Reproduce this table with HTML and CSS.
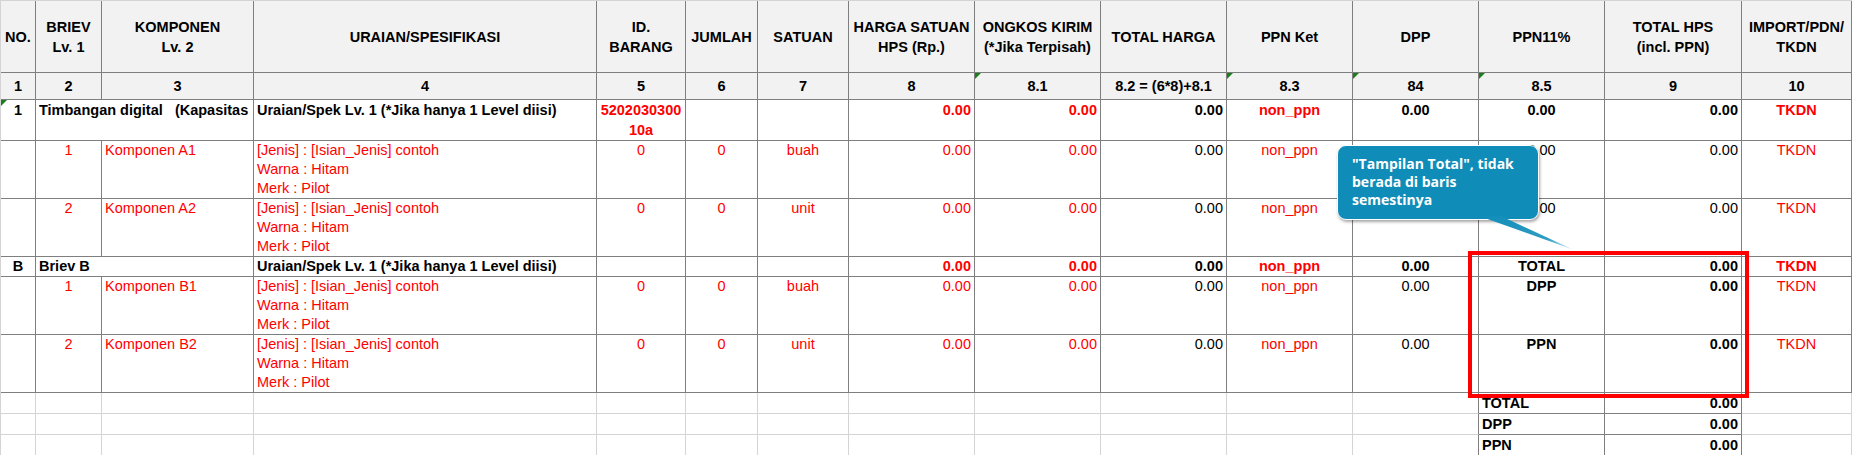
FILE: index.html
```html
<!DOCTYPE html>
<html lang="id">
<head>
<meta charset="utf-8">
<title>HPS</title>
<link rel="stylesheet" href="styles.css">
</head>
<body>
<div class="sheet">
  <table class="grid">
    <colgroup>
      <col class="w35"><col class="w66"><col class="w152"><col class="w343"><col class="w89"><col class="w72"><col class="w91">
      <col class="w126"><col class="w126"><col class="w126"><col class="w126"><col class="w126"><col class="w126"><col class="w137"><col class="w110">
    </colgroup>
    <tr class="hd">
      <th>NO.</th>
      <th>BRIEV<br>Lv. 1</th>
      <th>KOMPONEN<br>Lv. 2</th>
      <th>URAIAN/SPESIFIKASI</th>
      <th>ID.<br>BARANG</th>
      <th>JUMLAH</th>
      <th>SATUAN</th>
      <th>HARGA SATUAN<br>HPS (Rp.)</th>
      <th>ONGKOS KIRIM<br>(*Jika Terpisah)</th>
      <th>TOTAL HARGA</th>
      <th>PPN Ket</th>
      <th>DPP</th>
      <th>PPN11%</th>
      <th>TOTAL HPS<br>(incl. PPN)</th>
      <th>IMPORT/PDN/<br>TKDN</th>
    </tr>
    <tr class="num">
      <th>1</th><th>2</th><th>3</th><th>4</th><th>5</th><th>6</th><th>7</th><th>8</th>
      <th class="mark"><span class="flag"></span>8.1</th>
      <th>8.2 = (6*8)+8.1</th>
      <th class="mark"><span class="flag"></span>8.3</th>
      <th class="mark"><span class="flag"></span>84</th>
      <th class="mark"><span class="flag"></span>8.5</th>
      <th>9</th><th>10</th>
    </tr>
    <tr class="r1">
      <td class="c b mark"><span class="flag"></span>1</td>
      <td class="b pre" colspan="2">Timbangan digital   (Kapasitas</td>
      <td class="b">Uraian/Spek Lv. 1 (*Jika hanya 1 Level diisi)</td>
      <td class="c b red">5202030300<br>10a</td>
      <td></td><td></td>
      <td class="rt b red">0.00</td>
      <td class="rt b red">0.00</td>
      <td class="rt b">0.00</td>
      <td class="c b red">non_ppn</td>
      <td class="c b">0.00</td>
      <td class="c b">0.00</td>
      <td class="rt b">0.00</td>
      <td class="c b red">TKDN</td>
    </tr>
    <tr class="item">
      <td></td>
      <td class="c red">1</td>
      <td class="red">Komponen A1</td>
      <td class="red">[Jenis] : [Isian_Jenis] contoh<br>Warna : Hitam<br>Merk : Pilot</td>
      <td class="c red">0</td><td class="c red">0</td><td class="c red">buah</td>
      <td class="rt red">0.00</td><td class="rt red">0.00</td><td class="rt">0.00</td>
      <td class="c red">non_ppn</td><td class="c">0.00</td><td class="c">0.00</td><td class="rt">0.00</td>
      <td class="c red">TKDN</td>
    </tr>
    <tr class="item">
      <td></td>
      <td class="c red">2</td>
      <td class="red">Komponen A2</td>
      <td class="red">[Jenis] : [Isian_Jenis] contoh<br>Warna : Hitam<br>Merk : Pilot</td>
      <td class="c red">0</td><td class="c red">0</td><td class="c red">unit</td>
      <td class="rt red">0.00</td><td class="rt red">0.00</td><td class="rt">0.00</td>
      <td class="c red">non_ppn</td><td class="c">0.00</td><td class="c">0.00</td><td class="rt">0.00</td>
      <td class="c red">TKDN</td>
    </tr>
    <tr class="grp">
      <td class="c b">B</td>
      <td class="b" colspan="2">Briev B</td>
      <td class="b">Uraian/Spek Lv. 1 (*Jika hanya 1 Level diisi)</td>
      <td></td><td></td><td></td>
      <td class="rt b red">0.00</td>
      <td class="rt b red">0.00</td>
      <td class="rt b">0.00</td>
      <td class="c b red">non_ppn</td>
      <td class="c b">0.00</td>
      <td class="c b">TOTAL</td>
      <td class="rt b">0.00</td>
      <td class="c b red">TKDN</td>
    </tr>
    <tr class="item">
      <td></td>
      <td class="c red">1</td>
      <td class="red">Komponen B1</td>
      <td class="red">[Jenis] : [Isian_Jenis] contoh<br>Warna : Hitam<br>Merk : Pilot</td>
      <td class="c red">0</td><td class="c red">0</td><td class="c red">buah</td>
      <td class="rt red">0.00</td><td class="rt red">0.00</td><td class="rt">0.00</td>
      <td class="c red">non_ppn</td><td class="c">0.00</td><td class="c b">DPP</td><td class="rt b">0.00</td>
      <td class="c red">TKDN</td>
    </tr>
    <tr class="item">
      <td></td>
      <td class="c red">2</td>
      <td class="red">Komponen B2</td>
      <td class="red">[Jenis] : [Isian_Jenis] contoh<br>Warna : Hitam<br>Merk : Pilot</td>
      <td class="c red">0</td><td class="c red">0</td><td class="c red">unit</td>
      <td class="rt red">0.00</td><td class="rt red">0.00</td><td class="rt">0.00</td>
      <td class="c red">non_ppn</td><td class="c">0.00</td><td class="c b">PPN</td><td class="rt b">0.00</td>
      <td class="c red">TKDN</td>
    </tr>
    <tr class="empty">
      <td></td><td></td><td></td><td></td><td></td><td></td><td></td><td></td><td></td><td></td><td></td>
      <td class="edge"></td>
      <td class="box b">TOTAL</td>
      <td class="box rt b">0.00</td>
      <td></td>
    </tr>
    <tr class="empty">
      <td></td><td></td><td></td><td></td><td></td><td></td><td></td><td></td><td></td><td></td><td></td>
      <td class="edge"></td>
      <td class="box b">DPP</td>
      <td class="box rt b">0.00</td>
      <td></td>
    </tr>
    <tr class="empty">
      <td></td><td></td><td></td><td></td><td></td><td></td><td></td><td></td><td></td><td></td><td></td>
      <td class="edge"></td>
      <td class="box b">PPN</td>
      <td class="box rt b">0.00</td>
      <td></td>
    </tr>
  </table>

  <div class="highlight"></div>

  <svg class="tail" width="110" height="40" viewBox="0 0 110 40">
    <defs>
      <linearGradient id="tailFill" x1="0" y1="0" x2="1" y2="1">
        <stop offset="0" stop-color="#0f8cb7"/>
        <stop offset="0.7" stop-color="#2f9dc4"/>
        <stop offset="1" stop-color="#e6f3f8"/>
      </linearGradient>
    </defs>
    <polygon points="0,0 22,0 95,34" fill="url(#tailFill)"/>
  </svg>
  <div class="callout">"Tampilan Total", tidak<br>berada di baris<br>semestinya</div>
</div>
</body>
</html>
```

FILE: styles.css
```css
html, body {
  margin: 0;
  padding: 0;
  background: #ffffff;
}

body {
  font-family: "Liberation Sans", Arial, sans-serif;
  font-size: 14.5px;
  color: #000000;
}

.sheet {
  position: relative;
  width: 1852px;
  height: 455px;
  overflow: hidden;
}

.grid {
  border-collapse: separate;
  border-spacing: 0;
  table-layout: fixed;
  width: 1852px;
  border-left: 1px solid #d4d4d4;
  border-top: 1px solid #d4d4d4;
}

.w35 { width: 35px; }
.w66 { width: 66px; }
.w152 { width: 152px; }
.w343 { width: 343px; }
.w89 { width: 89px; }
.w72 { width: 72px; }
.w91 { width: 91px; }
.w126 { width: 126px; }
.w137 { width: 137px; }
.w110 { width: 110px; }

.grid th,
.grid td {
  box-sizing: border-box;
  border-right: 1px solid #7f7f7f;
  border-bottom: 1px solid #7f7f7f;
  padding: 0 3px;
  line-height: 19px;
  vertical-align: top;
  white-space: nowrap;
  overflow: hidden;
  text-align: left;
  font-weight: normal;
}

.grid th {
  background: #f2f2f2;
  font-weight: bold;
  text-align: center;
  vertical-align: middle;
}

.hd { height: 72px; }
.hd th { line-height: 20px; }
.num { height: 27px; }
.r1 { height: 40px; }
.r1 td { line-height: 20px; }
.item { height: 58px; }
.grp { height: 20px; }
.empty { height: 21px; }

.empty td {
  border-right-color: #d4d4d4;
  border-bottom-color: #d4d4d4;
  vertical-align: bottom;
  line-height: 19px;
}

.empty td.edge {
  border-right-color: #7f7f7f;
}

.empty td.box {
  border-right-color: #7f7f7f;
  border-bottom-color: #7f7f7f;
}

.grid .c { text-align: center; }
.grid .rt { text-align: right; }
.grid .b { font-weight: bold; }
.grid .red { color: #ff0000; }
.grid .pre { white-space: pre; }

.mark { position: relative; }

.flag {
  position: absolute;
  left: 0;
  top: 0;
  width: 0;
  height: 0;
  border-top: 6px solid #1c7d1c;
  border-right: 6px solid transparent;
}

.highlight {
  position: absolute;
  left: 1468px;
  top: 251px;
  width: 281px;
  height: 147px;
  box-sizing: border-box;
  border: 4px solid #ff0000;
}

.callout {
  position: absolute;
  left: 1337px;
  top: 145px;
  width: 202px;
  height: 75px;
  box-sizing: border-box;
  padding: 9px 0 0 14px;
  background: #0f8cb7;
  border: 1px solid #ffffff;
  border-radius: 9px;
  box-shadow: 1px 2px 3px rgba(0, 0, 0, 0.35);
  color: #ffffff;
  font-family: "Open Sans", "DejaVu Sans", sans-serif;
  font-weight: bold;
  font-size: 14px;
  line-height: 18px;
  white-space: nowrap;
}

.tail {
  position: absolute;
  left: 1479px;
  top: 216px;
  z-index: 2;
}
```
